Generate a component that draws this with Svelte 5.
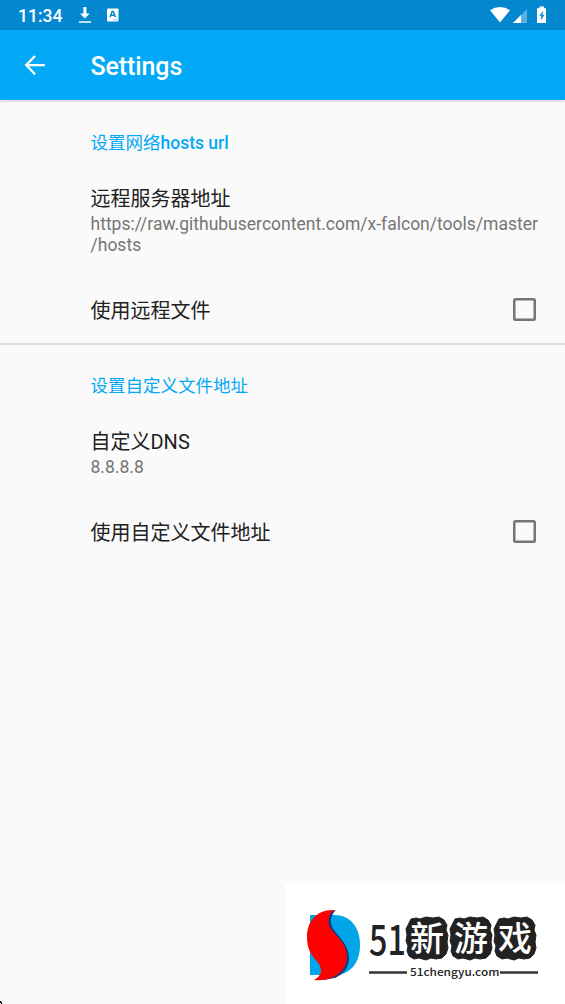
<script lang="ts">
  const groups = [
    {
      title: '设置网络',
      suffix: 'hosts url',
      prefs: [
        { title: '远程服务器地址', lines: ['https://raw.githubusercontent.com/x-falcon/tools/master', '/hosts'] },
        { title: '使用远程文件', checkbox: true }
      ]
    },
    {
      title: '设置自定义文件地址',
      suffix: '',
      prefs: [
        { title: '自定义DNS', lines: ['8.8.8.8'] },
        { title: '使用自定义文件地址', checkbox: true }
      ]
    }
  ];

  const stamps = [
    { char: '新', x: 121 },
    { char: '游', x: 165 },
    { char: '戏', x: 209 }
  ];

  let checked = $state({});
</script>

<div class="screen">
  <div class="statusbar">
    <span class="time">11:34</span>
    <svg class="download" width="14" height="18" viewBox="0 0 14 18" fill="#fff">
      <path d="M5.400 1h3v6.500h3.300L6.900 12.500 2 7.500h3.400zM1 15.300h12v1.500H1z" />
    </svg>
    <svg class="keyboard" width="12" height="14" viewBox="0 0 12 14">
      <rect x="0" y="0.500" width="11.500" height="13" rx="1" fill="#fff" />
      <path d="M3 9.200 5.100 3.500h1.200l2.100 5.700M3.900 7.300h3.600" fill="none" stroke="#0388d0" stroke-width="1.500" />
      <path d="M6.500 11.800h1.200M8.500 11.800h1.800" stroke="#6bb8e3" />
    </svg>
    <svg class="signals" width="60" height="20" viewBox="0 0 60 20">
      <path d="M0 5.300Q10 -1.500 20 5.300L10 17.500z" fill="#fff" />
      <path d="M37 4v14H23z" fill="#fff" fill-opacity="0.350" />
      <path d="M31 10V18h-8z" fill="#fff" />
      <path d="M49.500 1.500h4.500v1.800h2V18h-9V3.300h2.500z" fill="#fff" />
      <path d="M53.300 5.800 49.200 10.800h2.200l-.8 4.700 4-5.700h-2.300z" fill="#0388d0" />
    </svg>
  </div>

  <header class="toolbar">
    <svg width="22" height="22" viewBox="0 0 22 22" fill="none" stroke="#fff" stroke-width="2.300">
      <path d="M11 2 2.200 11.100 11 20.200M2.200 11.100h18.600" />
    </svg>
    <h1>Settings</h1>
  </header>

  <main>
    {#each groups as group, g}
      <section>
        <h2>{group.title}<b>{group.suffix}</b></h2>
        {#each group.prefs as pref}
          {#if pref.checkbox}
            <div class="row">
              <span class="title">{pref.title}</span>
              <button
                class="box"
                class:on={checked[g]}
                aria-label={pref.title}
                onclick={() => (checked[g] = !checked[g])}
              ></button>
            </div>
          {:else}
            <div class="pref">
              <div class="title">{pref.title}</div>
              {#each pref.lines as line}
                <div class="summary">{line}</div>
              {/each}
            </div>
          {/if}
        {/each}
      </section>
    {/each}
  </main>

  <div class="brand">
    <svg width="280" height="120" viewBox="0 0 280 120">
      <path d="M25 31h24c17 0 26 13 26 30S66 91 49 91H25z" fill="#00a6e7" />
      <path d="M51 26C45 32 44 39 49 46C55 54 64 62 64 74C64 83 59 90 50 94L38 96V30z" fill="#073f8b" />
      <path d="M50 26C31 25 22 38 22 53C22 69 30 74 34 80C38 87 36 92 29 96C48 98 62 87 62 73C62 58 50 52 45 43C42 37 44 29 50 26z" fill="#f00" />
      <text transform="translate(84 71) scale(0.770 1)" class="number">51</text>
      {#each stamps as stamp}
        <g transform="translate({stamp.x} 33)">
          <path
            d="M5 2 10 1 14 2 20 0 27 1 33 0 38 3 41 8 40 13 42 18 41 25 42 31 40 37 36 41 30 42 25 41 20 43 13 41 8 42 3 39 1 34 2 29 0 24 1 18 0 12 2 8z"
            fill="#222"
            stroke="#222"
            stroke-linejoin="round"
          />
          <text x="21" y="34" class="stamp">{stamp.char}</text>
        </g>
      {/each}
      <path d="M84 88.500h38M215 88.500h38" stroke="#333" stroke-width="2.500" />
      <text transform="translate(125 92) scale(1.150 1)" class="domain">51chengyu.com</text>
    </svg>
  </div>
  <svg class="corner" width="2" height="3" viewBox="0 0 2 3"><path d="M0 0h1v1h1v2H1V2H0z" /></svg>
</div>

<style>
  :global(body) {
    background: #fafafa;
  }
  .screen {
    position: relative;
    height: 1004px;
    overflow: hidden;
    background: #fafafa;
    font-family: Roboto, "Noto Sans CJK SC", sans-serif;
    color: #212121;
  }
  svg {
    display: block;
    flex: none;
  }
  .statusbar {
    display: flex;
    align-items: center;
    box-sizing: border-box;
    height: 30px;
    padding: 0 16px 0 18px;
    background: #0388d0;
    color: #fff;
  }
  .time {
    width: 60px;
    font-size: 17.5px;
    font-weight: 500;
    line-height: 30px;
    padding-top: 2px;
  }
  .keyboard {
    margin-left: 15px;
  }
  .signals {
    margin-left: auto;
    margin-right: -1px;
  }
  .toolbar {
    position: relative;
    display: flex;
    align-items: center;
    height: 70px;
    padding-left: 24px;
    background: #03a9f6;
    box-shadow: 0 1px 3px rgba(0, 0, 0, 0.2);
  }
  h1 {
    margin: 4px 0 0 44.5px;
    color: #fff;
    font-size: 25px;
    font-weight: 500;
    line-height: 30px;
    letter-spacing: -0.1px;
  }
  section {
    box-sizing: border-box;
    height: 243px;
    padding: 30px 29px 0 90.5px;
  }
  section + section {
    border-top: 2px solid #dedede;
    padding-top: 28px;
  }
  h2 {
    margin: 0;
    color: #03a9f6;
    font-size: 17.5px;
    font-weight: 400;
    line-height: 26px;
  }
  b {
    font-weight: 500;
  }
  .pref {
    padding: 29px 0 24px;
  }
  .title {
    font-size: 20px;
    line-height: 28px;
  }
  .summary {
    color: #757575;
    font-size: 17.5px;
    line-height: 21px;
    letter-spacing: 0.01px;
    white-space: nowrap;
  }
  .title + .summary {
    margin-top: 1px;
  }
  .row {
    display: flex;
    align-items: center;
    justify-content: space-between;
    height: 60px;
  }
  .row .title {
    padding-top: 1px;
  }
  .box {
    box-sizing: border-box;
    width: 23px;
    height: 23px;
    margin-bottom: 1px;
    padding: 0;
    border: 2.5px solid #757575;
    border-radius: 2.5px;
    background: transparent;
    box-shadow: inset 0 0 0 0.5px #757575;
  }
  .box.on {
    border-color: #03a9f6;
    background: #03a9f6;
  }
  .brand {
    position: absolute;
    right: 0;
    bottom: 0;
    background: #fff;
  }
  .number {
    font: 500 42px/1 "Noto Sans CJK SC", sans-serif;
    fill: #222;
  }
  .stamp {
    font: 500 34px/1 "Noto Sans CJK SC", sans-serif;
    fill: #fff;
    text-anchor: middle;
  }
  .domain {
    font: 500 10.3px "Noto Sans CJK SC", sans-serif;
    fill: #222;
  }
  .corner {
    position: absolute;
    left: 0;
    bottom: 0;
  }
</style>
